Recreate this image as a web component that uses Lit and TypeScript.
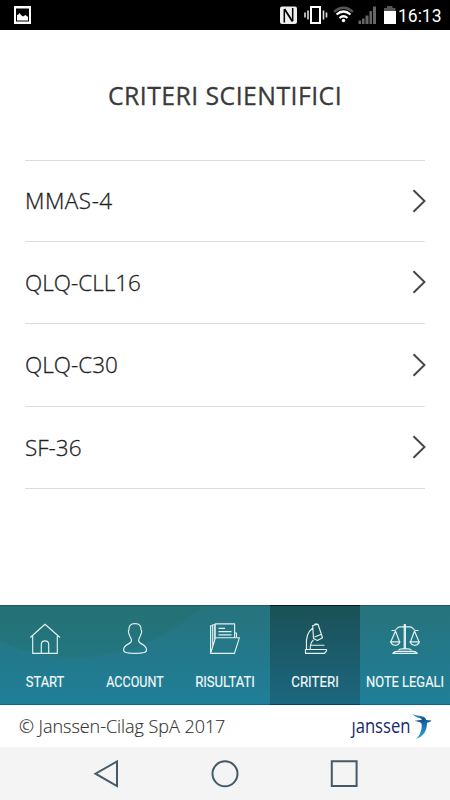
import { LitElement, html, css, svg } from "lit";
import { customElement } from "lit/decorators.js";
import { classMap } from "lit/directives/class-map.js";

const home = svg`<path d="M30.3 637.5 45 624.2 60 637.5 M32.7 636V653.4H57.3V636 M41.3 653V644.5Q41.3 640.8 45 640.8T48.7 644.5V653"/>`;
const person = svg`<path d="M135 623.7C130.500 623.500 128.600 626 128.900 630C128.200 630.500 128.300 633.500 129.300 634.500C129.700 637 131.500 638.500 131.500 640.500C131.500 644.500 124 643.800 123.600 649.500C123.400 652.500 126 653.400 135 653.400S146.800 652.500 146.500 649.500C146 643.800 138.600 644.500 138.600 640.500C138.600 638.500 140.300 637 140.700 634.500C141.800 633.500 141.900 630.500 141.100 630C141.400 626 139.500 623.500 135 623.700Z"/>`;
const folder = svg`<path d="M210.600 653.300V625.700H213M210.600 653.300 215.500 637.700H239.400L234.500 653.300ZM212.700 646V624.700H214.700V640M215.200 637V623.900H234.600V637.500M236.500 637V633H234.600M218.500 628.400H225M218.500 631.600H231.500M218.500 634.800H231.500"/>`;
const microscope = svg`<path d="M312.700 625.500 318 624.300 322.500 637.700 317.500 640.500 313.500 638.500ZM314.200 624.300 317.200 623.800M314.500 637 320.800 634.500M312.800 628C307.500 632 305.800 638 306.500 645.500V649.500M313.500 640C310.800 642 310 645 310.300 649.500M310.500 645.200H324.500M305.500 649.500H326.500V650.800L324.500 653.400H305.500Z"/>`;
const scales = svg`<path d="M404.200 649V624.500H405.400V649M391.500 630.500H394C397 630.500 396.500 626.800 400 626.800H410C413.500 626.800 413 630.500 416 630.500H418.500M395.500 631 390.800 641.800M395.500 631 399.500 641.800M414.500 631 410.500 641.800M414.500 631 419 641.800M390.500 641.800H400Q398.500 645.300 395.300 645.300T390.500 641.800ZM410 641.800H419.500Q418 645.300 414.800 645.300T410 641.800ZM398.500 650.300Q399.500 648.800 402 648.800H408Q410.500 648.800 411.500 650.300M392.800 653.300Q394 651.300 397 651.300H413Q416 651.300 417.300 653.300Z"/>`;

const tabs = [
  { label: "START", icon: home, width: 38.5 },
  { label: "ACCOUNT", icon: person, width: 57.5 },
  { label: "RISULTATI", icon: folder, width: 59.5 },
  { label: "CRITERI", icon: microscope, width: 47.5, active: true },
  { label: "NOTE LEGALI", icon: scales, width: 78 },
];

@customElement("app-root")
export class AppRoot extends LitElement {
  static styles = css`
    :host {
      display: flex;
      flex-direction: column;
      width: 450px;
      height: 800px;
      overflow: hidden;
      background: #fff;
      font-family: "Open Sans", sans-serif;
    }
    svg { display: block; }
    .status { height: 30px; background: #000; flex: none; }
    .status text { font: 400 18.5px Roboto, sans-serif; fill: #fff; }
    .main { flex: 1; display: flex; flex-direction: column; }
    h1 {
      margin: 0;
      height: 130px;
      line-height: 131px;
      font-size: 24.800px;
      letter-spacing: 0.460px;
      font-weight: 400;
      text-align: center;
      color: #3a3a3a;
      -webkit-text-stroke: 0.3px #3a3a3a;
    }
    .list { margin: 0 25px; border-top: 1px solid #dcdcdc; }
    .row {
      height: 82.600px;
      box-sizing: border-box;
      border-bottom: 1px solid #dcdcdc;
      display: flex;
      align-items: center;
      justify-content: space-between;
      font-size: 22.500px;
      font-weight: 300;
      color: #222;
      -webkit-text-stroke: 0.300px #222;
    }
    .row:first-child { height: 80.500px; }
    .row:first-child span { letter-spacing: 0.500px; }
    .row svg { margin-right: -0.5px; }
    .tabs {
      flex: none;
      height: 100px;
      display: grid;
      grid-template-columns: repeat(5, 90px);
      background:
        radial-gradient(circle 185px at 75px -132px, rgba(30, 105, 85, 0.2) 99%, transparent 100%),
        linear-gradient(#26737c, #207f99);
      box-shadow: inset 0 1px #1b5960, inset 0 -1px #09698a;
    }
    .tab.active {
      background: linear-gradient(#1b5056, #1c6780);
      box-shadow: inset 0 1px #071b20, inset 0 -1px #044263;
    }
    .tab svg { overflow: visible; }
    .tab g { fill: none; stroke: #e4f1f2; stroke-width: 1.150; stroke-linejoin: round; }
    .tab text {
      font: 400 15px Roboto, sans-serif;
      fill: #f4fafb;
      stroke: #f4fafb;
      stroke-width: 0.15px;
      text-anchor: middle;
    }
    .footer {
      flex: none;
      height: 42px;
      display: flex;
      align-items: center;
      justify-content: space-between;
      padding-left: 19px;
      font-size: 18px;
      letter-spacing: -0.040px;
      font-weight: 300;
      color: #333;
      -webkit-text-stroke: 0.15px #333;
    }
    .brand text {
      font: 400 20px "Open Sans", sans-serif;
      letter-spacing: 0;
      -webkit-text-stroke: 0;
      fill: #17296c;
    }
    .nav { flex: none; height: 53px; background: #f4f4f4; }
    .nav g { fill: none; stroke: #455a66; stroke-width: 2; }
  `;

  render() {
    return html`
      <div class="status">
        <svg width="450" height="30" viewBox="0 0 450 30">
          <path fill="#fff" fill-rule="evenodd" d="M14 6H31V24H14ZM16 8.500V21.500H29V8.500Z" />
          <path fill="#fff" d="M17 20.500V15L18.500 14.500 19.500 13 21 15 23 16.500 25.500 15 28 17V20.500Z" />
          <path fill="#eee" d="M282 6.500H295Q297 6.500 297 8.500V22Q297 24 295 24H282Q280 24 280 22V8.500Q280 6.500 282 6.500Z" />
          <path fill="none" stroke="#000" stroke-width="1.500" d="M284.300 22.500V9.500M292.700 21V8" />
          <path fill="none" stroke="#000" stroke-width="1.800" d="M284.500 9 292.500 21.500" />
          <path fill="none" stroke="#fff" stroke-width="2" d="M311 7H320V23H311Z" />
          <path fill="none" stroke="#ddd" stroke-width="1.600" d="M308 10.500V19.500M305 12.500V17.500M323.500 10.500V19.500M326.500 12.500V17.500" />
          <path fill="none" stroke="#555" stroke-width="2.400" d="M334 11.800Q343.500 3.800 353 11.800" />
          <path fill="none" stroke="#fff" stroke-width="2.200" d="M336.500 14.500Q343.500 8.500 350.500 14.500M339.500 18Q343.500 14.500 347.500 18" />
          <circle cx="343.500" cy="20.500" r="1.700" fill="#fff" />
          <path fill="#666" d="M358.500 20.500H361V24H358.500ZM362 18.500H364.500V24H362ZM365.500 15.500H368.500V24H365.500ZM369.500 11H372V24H369.500ZM373 6.500H376V24H373Z" />
          <path fill="#555" d="M387 6H392.500V8H395.500V11.500H384V8H387Z" />
          <path fill="#fff" d="M384 11H396V24H384Z" />
          <text x="398" y="22" textLength="43.500" lengthAdjust="spacingAndGlyphs">16:13</text>
        </svg>
      </div>
      <div class="main">
        <h1>CRITERI SCIENTIFICI</h1>
        <div class="list">
          ${["MMAS-4", "QLQ-CLL16", "QLQ-C30", "SF-36"].map(
            (name) => html`<div class="row">
              <span>${name}</span>
              <svg width="14" height="24" viewBox="0 0 14 24">
                <path d="M1.500 1.200 12.500 12 1.500 22.800" fill="none" stroke="#444" stroke-width="1.900" />
              </svg>
            </div>`,
          )}
        </div>
      </div>
      <div class="tabs">
        ${tabs.map(
          (t, i) => html`<div class=${classMap({ tab: true, active: !!t.active })}>
            <svg width="90" height="100" viewBox="${i * 90} 605 90 100">
              <g>${t.icon}</g>
              <text x=${i * 90 + 45} y="686.500" textLength=${t.width} lengthAdjust="spacingAndGlyphs">${t.label}</text>
            </svg>
          </div>`,
        )}
      </div>
      <div class="footer">
        <span>© Janssen-Cilag SpA 2017</span>
        <svg class="brand" width="110" height="42" viewBox="340 705 110 42">
          <defs>
            <linearGradient id="wing" gradientUnits="userSpaceOnUse" x1="413" y1="714" x2="420" y2="739">
              <stop offset="0" stop-color="#35b0df" />
              <stop offset=".3" stop-color="#14508f" />
              <stop offset=".55" stop-color="#1973b4" />
              <stop offset="1" stop-color="#2fa3d6" />
            </linearGradient>
          </defs>
          <text x="351.500" y="732.700" textLength="59" lengthAdjust="spacingAndGlyphs">ȷanssen</text>
          <path fill="url(#wing)" d="M412.300 713.800C415.500 715.900 420 715.300 423.500 716.700C425.300 717.500 425.700 719 426.200 720L431.500 720.500C431 722 428.500 722.500 427 722.800C427 731 423.500 736.500 416.200 738.900C420.300 735 422 729.500 421.700 724.500C421.500 722.400 419.500 721.900 414.500 720.700C417.500 720.200 420.300 720.200 422.200 719.700C420.500 717.300 414.500 718 412.300 713.800Z" />
        </svg>
      </div>
      <div class="nav">
        <svg width="450" height="53" viewBox="0 747 450 53">
          <g>
            <path d="M117 761.500V786L95.500 773.700Z" />
            <circle cx="225" cy="773.800" r="12.500" />
            <path d="M331.800 761.300H356.600V786H331.800Z" />
          </g>
        </svg>
      </div>
    `;
  }
}
